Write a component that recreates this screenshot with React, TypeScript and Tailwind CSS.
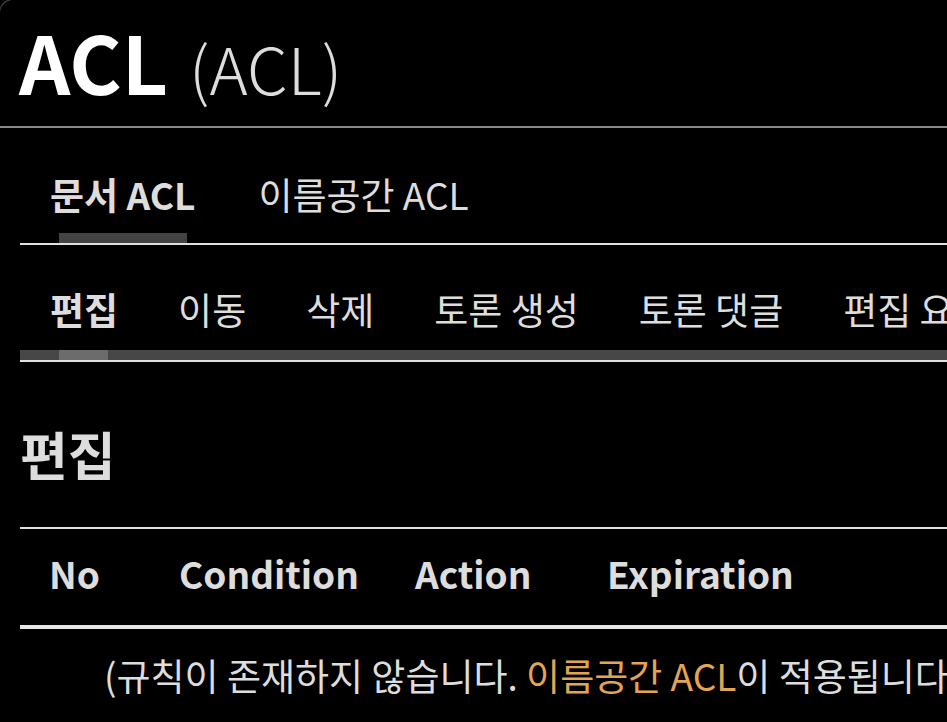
const font = { fontFamily: '"Noto Sans CJK KR", "Noto Sans", sans-serif' }

const docTabs = ["편집", "이동", "삭제", "토론 생성", "토론 댓글", "편집 요청", "ACL"]

export default function App() {
  return (
    <div className="w-[947px] h-[722px] overflow-hidden bg-black text-[#dddddd]" style={font}>
      <div className="-ml-px -mt-px h-[730px] rounded-tl-[14px] border-l border-t border-[#4a4a4a]">
        <div className="h-[126px] pl-[19px] pt-[20px] flex items-baseline whitespace-nowrap leading-none">
          <span className="text-[80px] font-bold text-white">ACL</span>
          <span className="ml-[21px] text-[65px] font-light text-[#dddddd]">(ACL)</span>
        </div>
        <div className="h-[2px] bg-[#8a8a8a]" />

        <div className="pl-[20px]">
          {/* top tabs */}
          <div className="pt-[48px] flex whitespace-nowrap text-[37px] leading-none">
            <span className="ml-[30px] font-bold">문서 ACL</span>
            <span className="ml-[63px]">이름공간 ACL</span>
          </div>
          <div className="mt-[20px] flex h-[10px]">
            <div className="ml-[39px] w-[128px] bg-[#434343]" />
          </div>
          <div className="h-[2px] bg-[#e0e0e0]" />

          {/* action tabs */}
          <div className="pt-[46px] flex whitespace-nowrap text-[37px] leading-none">
            {docTabs.map((t, i) => (
              <span key={t} className={i === 0 ? "ml-[30px] font-bold" : "ml-[60px]"}>
                {t}
              </span>
            ))}
          </div>
          <div className="mt-[22px] flex h-[10px] bg-[#474747]">
            <div className="ml-[39px] w-[49px] bg-[#6c6c6c]" />
          </div>
          <div className="h-[2px] bg-[#e0e0e0]" />

          <h2 className="pt-[66px] text-[52px] font-bold leading-none">편집</h2>

          <div className="mt-[47px] h-[2px] bg-[#e0e0e0]" />
          <div className="pt-[26px] flex whitespace-nowrap text-[37px] font-bold leading-none">
            <span className="ml-[29px] w-[130px]">No</span>
            <span className="w-[236px]">Condition</span>
            <span className="w-[192px]">Action</span>
            <span>Expiration</span>
          </div>
          <div className="mt-[33px] h-[4px] bg-[#e6e6e6]" />
          <div className="pt-[28px] pl-[84px] whitespace-nowrap text-[37px] leading-none">
            (규칙이 존재하지 않습니다. <span className="text-[#e3a553]">이름공간 ACL</span>이 적용됩니다.)
          </div>
        </div>
      </div>
    </div>
  )
}
